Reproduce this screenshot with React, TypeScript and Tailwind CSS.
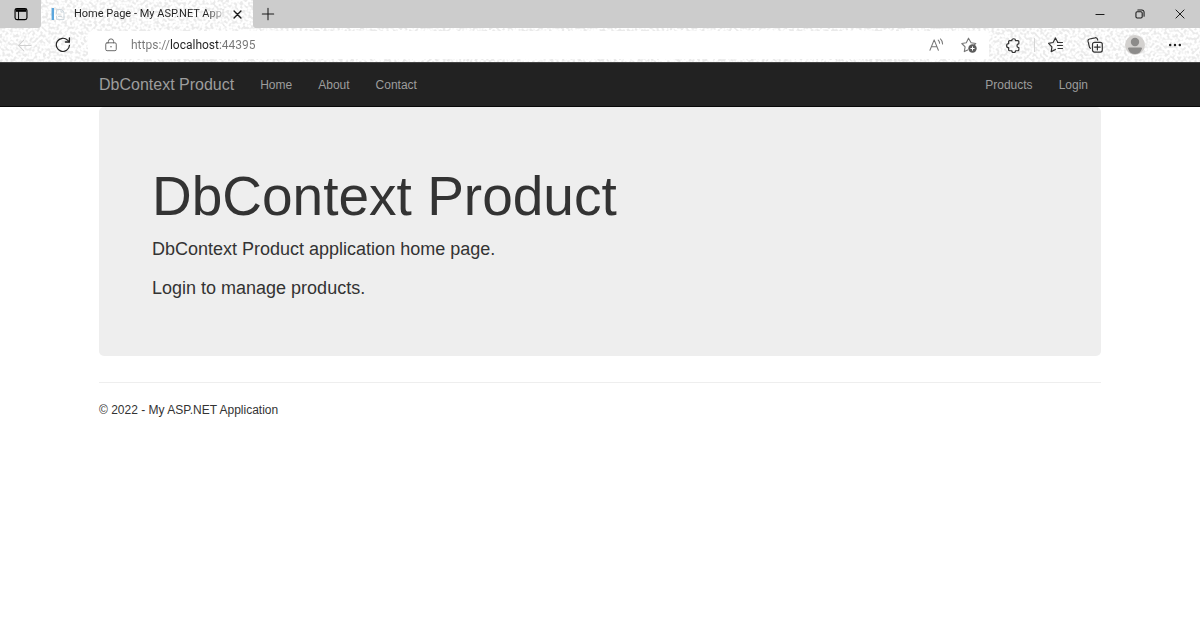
import type { ReactNode } from "react";

type IconProps = { size?: number; className?: string; children: ReactNode };

function Icon({ size = 16, className = "", children }: IconProps) {
  return (
    <svg
      width={size}
      height={size}
      viewBox="0 0 16 16"
      fill="none"
      stroke="currentColor"
      strokeWidth="1.1"
      strokeLinecap="round"
      strokeLinejoin="round"
      aria-hidden="true"
      className={`shrink-0 ${className}`}
    >
      {children}
    </svg>
  );
}

function Grain() {
  return (
    <svg aria-hidden="true" className="absolute inset-0 h-full w-full">
      <filter id="grain" x="0" y="0" width="100%" height="100%" colorInterpolationFilters="sRGB">
        <feTurbulence type="fractalNoise" baseFrequency="0.37" numOctaves="1" seed="7" />
        <feColorMatrix values="5 0 0 0 -1.8  5 0 0 0 -1.8  5 0 0 0 -1.8  0 0 0 0 1" />
        <feComponentTransfer>
          <feFuncR type="table" tableValues="0.92 1" />
          <feFuncG type="table" tableValues="0.92 1" />
          <feFuncB type="table" tableValues="0.92 1" />
        </feComponentTransfer>
      </filter>
      <rect width="100%" height="100%" filter="url(#grain)" />
    </svg>
  );
}

function TabStrip() {
  return (
    <div className="relative flex h-7 items-stretch text-[#1b1b1b]">
      <button type="button" aria-label="Tab actions" className="w-[41px] justify-center rounded-br-[3px] bg-[#cccccc]">
        <Icon size={14} className="text-black">
          <rect x="1.2" y="1.8" width="13.6" height="12.6" rx="2.2" strokeWidth="1.3" />
          <path d="M2 4h12" strokeWidth="3" strokeLinecap="butt" />
          <path d="M5.2 5v9" strokeWidth="1.1" />
        </Icon>
      </button>
      <div className="flex w-[212px] items-center pl-2.5">
        <svg width="14" height="14" viewBox="0 0 14 14" fill="none" aria-hidden="true" className="shrink-0">
          <path d="M1.8 1v12" stroke="#5ba6dd" strokeWidth="2.4" />
          <path d="M5.5 7V2.5h5L13 5v7.5H5.5V9M10 2.5V5h3M7 9.5h4" stroke="#cfd8de" strokeWidth="1" />
        </svg>
        <span className="ml-[9px] w-[150px] bg-[linear-gradient(90deg,#222_88%,#2222_100%)] bg-clip-text font-[Roboto,sans-serif] text-[11px] whitespace-nowrap text-transparent">
          Home Page - My ASP.NET Applic
        </span>
        <button type="button" aria-label="Close tab" className="ml-2">
          <Icon size={11}>
            <path d="M3 3l10 10M13 3L3 13" strokeWidth="2" />
          </Icon>
        </button>
      </div>
      <div className="flex grow items-center rounded-bl-[3px] bg-[#cccccc]">
        <button type="button" aria-label="New tab" className="ml-2">
          <Icon size={14}>
            <path d="M8 1.5v13M1.5 8h13" strokeWidth="1.2" />
          </Icon>
        </button>
        <div className="ml-auto flex items-center">
          <button type="button" aria-label="Minimize" className="w-10 justify-center">
            <Icon size={10}>
              <path d="M1.5 8.8h13" strokeWidth="1.6" />
            </Icon>
          </button>
          <button type="button" aria-label="Restore" className="w-10 justify-center">
            <Icon size={10}>
              <rect x="1.5" y="4.5" width="10" height="10" rx="2" strokeWidth="1.7" />
              <path d="M4.5 1.5h6.5a3.5 3.5 0 0 1 3.5 3.5v6.5" strokeWidth="1.7" />
            </Icon>
          </button>
          <button type="button" aria-label="Close" className="w-10 justify-center">
            <Icon size={10}>
              <path d="M1.5 1.5l13 13M14.5 1.5l-13 13" strokeWidth="1.6" />
            </Icon>
          </button>
        </div>
      </div>
    </div>
  );
}

function Toolbar() {
  return (
    <div className="relative flex h-[34px] items-center text-[#333]">
      <button type="button" aria-label="Back" className="ml-[17px] text-[#cfcfcf]">
        <Icon size={15}>
          <path d="M15 8H1.5M7 2.5L1.5 8 7 13.5" />
        </Icon>
      </button>
      <button type="button" aria-label="Refresh" className="ml-[23px] text-[#222]">
        <Icon size={16}>
          <path d="M14.5 8.3A6.6 6.6 0 1 1 12.6 3.2L14.3 4.9" strokeWidth="1.2" />
          <path d="M14.4 1v4h-4" strokeWidth="1.3" />
        </Icon>
      </button>
      <div className="ml-[17px] flex h-7 grow items-center rounded-sm bg-white pr-3">
        <Icon size={14} className="ml-4 text-[#666]">
          <rect x="2" y="5.5" width="12" height="9" rx="1.5" />
          <path d="M5 5.5V4a3 3 0 0 1 6 0v1.5" />
          <circle cx="8" cy="10" r=".9" fill="currentColor" stroke="none" />
        </Icon>
        <input
          type="text"
          aria-label="Address"
          defaultValue="https://localhost:44395"
          className="ml-[13px] min-w-0 grow bg-[linear-gradient(90deg,#777_39px,#222_39px,#222_88px,#777_88px)] bg-clip-text font-[Roboto,sans-serif] text-[12px] text-transparent outline-none"
        />
        <button type="button" aria-label="Read aloud" className="text-[#777]">
          <Icon size={15}>
            <path d="M1 13L5.5 2 10 13M2.6 9.3h5.8" />
            <path d="M9.8 2.3q1.5 1.4 1.5 3.4M12.2 1q2.3 2.2 2.3 5.4" />
          </Icon>
        </button>
        <button type="button" aria-label="Add to favorites" className="ml-[17px] text-[#777]">
          <Icon size={16}>
            <path d="M14.8 6.5l-4.7-.8L7.5 1.2 5.3 5.7.8 6.5l3.3 3.4-.8 4.7 3.4-1.7M14.8 6.5l-1.5 1.2" />
            <circle cx="11.5" cy="11.5" r="4.2" fill="#5c5c5c" stroke="none" />
            <path d="M11.5 9.8v3.4M9.8 11.5h3.4" stroke="#fff" strokeWidth="1" />
          </Icon>
        </button>
      </div>
      <button type="button" aria-label="Extensions" className="ml-[17px]">
        <Icon size={15}>
          <path
            d="M3.8 2.8H6.2a2 2 0 0 1 4 0h2.5a1 1 0 0 1 1 1v2.4a2 2 0 1 0 0 4v2.4a1 1 0 0 1-1 1h-2.5a2 2 0 0 1-4 0H3.8a1 1 0 0 1-1-1v-2.3a2.1 2.1 0 0 1 0-4.2V3.8a1 1 0 0 1 1-1z"
            strokeWidth="1.3"
          />
        </Icon>
      </button>
      <span className="ml-[13px] h-3.5 w-px bg-[#d4d4d4]" />
      <button type="button" aria-label="Favorites" className="ml-[13px]">
        <Icon size={16}>
          <path
            d="M9.8 5.3L7.4 1 5.1 5.5.6 6.3l3.3 3.5-.7 4.8 4.2-2.1M9.5 5.5h5M9.5 8.500h5M10 11.500h4.500"
            strokeWidth="1.2"
          />
        </Icon>
      </button>
      <button type="button" aria-label="Collections" className="ml-[23px]">
        <Icon size={16}>
          <rect x="5.5" y="5.3" width="9.8" height="9.8" rx="2" strokeWidth="1.2" />
          <path
            d="M10.4 7.5v5.4M7.7 10.2h5.4M3.5 11.3A2 2 0 0 1 2.3 9.6L1 4.2A2 2 0 0 1 2.5 2L8 .8a2 2 0 0 1 2.5 1.5l.2.9"
            strokeWidth="1.2"
          />
        </Icon>
      </button>
      <button type="button" aria-label="Profile" className="ml-[22px]">
        <svg width="20" height="20" viewBox="0 0 20 20" aria-hidden="true">
          <circle cx="10" cy="10" r="10" fill="#d3d1cf" />
          <circle cx="10" cy="7" r="4.2" fill="#8c8b8a" />
          <path d="M3 13.5q0-1 1-1h12q1 0 1 1Q15.5 19 10 19t-7-5.5z" fill="#8c8b8a" />
        </svg>
      </button>
      <button type="button" aria-label="Settings and more" className="mr-[18px] ml-[23px] text-[#222]">
        <Icon size={14}>
          <g fill="currentColor" stroke="none">
            <circle cx="2.5" cy="8" r="1.4" />
            <circle cx="8" cy="8" r="1.4" />
            <circle cx="13.5" cy="8" r="1.4" />
          </g>
        </Icon>
      </button>
    </div>
  );
}

const navLink = "px-[13px]";

export default function App() {
  return (
    <div className="min-h-screen bg-white font-['Liberation_Sans',Arial,sans-serif] text-[#333] [&_button]:flex [&_button]:shrink-0 [&_button]:items-center">
      <div className="relative bg-[#f5f5f5]">
        <Grain />
        <TabStrip />
        <Toolbar />
      </div>

      <nav className="border-y border-t-[#444] border-b-[#080808] bg-[#222]">
        <div className="mx-auto flex h-[43px] max-w-[1002px] items-center text-[12px] text-[#9d9d9d]">
          <a href="#" className="pr-[13px] text-base">DbContext Product</a>
          <a href="#home" className={navLink}>Home</a>
          <a href="#about" className={navLink}>About</a>
          <a href="#contact" className={navLink}>Contact</a>
          <a href="#products" className="ml-auto px-[13px]">Products</a>
          <a href="#login" className={navLink}>Login</a>
        </div>
      </nav>

      <div className="mx-auto max-w-[1002px]">
        <main className="rounded-[5px] bg-[#eee] px-[53px] pt-[58px] pb-[42px]">
          <h1 className="mb-[9px] text-[55px] leading-[62px]">DbContext Product</h1>
          <p className="mb-[13px] text-[18px] leading-[26px]">DbContext Product application home page.</p>
          <p className="mb-[13px] text-[18px] leading-[26px]">Login to manage products.</p>
        </main>
        <hr className="mt-[26px] mb-[18px] border-[#eee]" />
        <footer className="text-[12px] leading-[18px]">
          <p>© 2022 - My ASP.NET Application</p>
        </footer>
      </div>
    </div>
  );
}
